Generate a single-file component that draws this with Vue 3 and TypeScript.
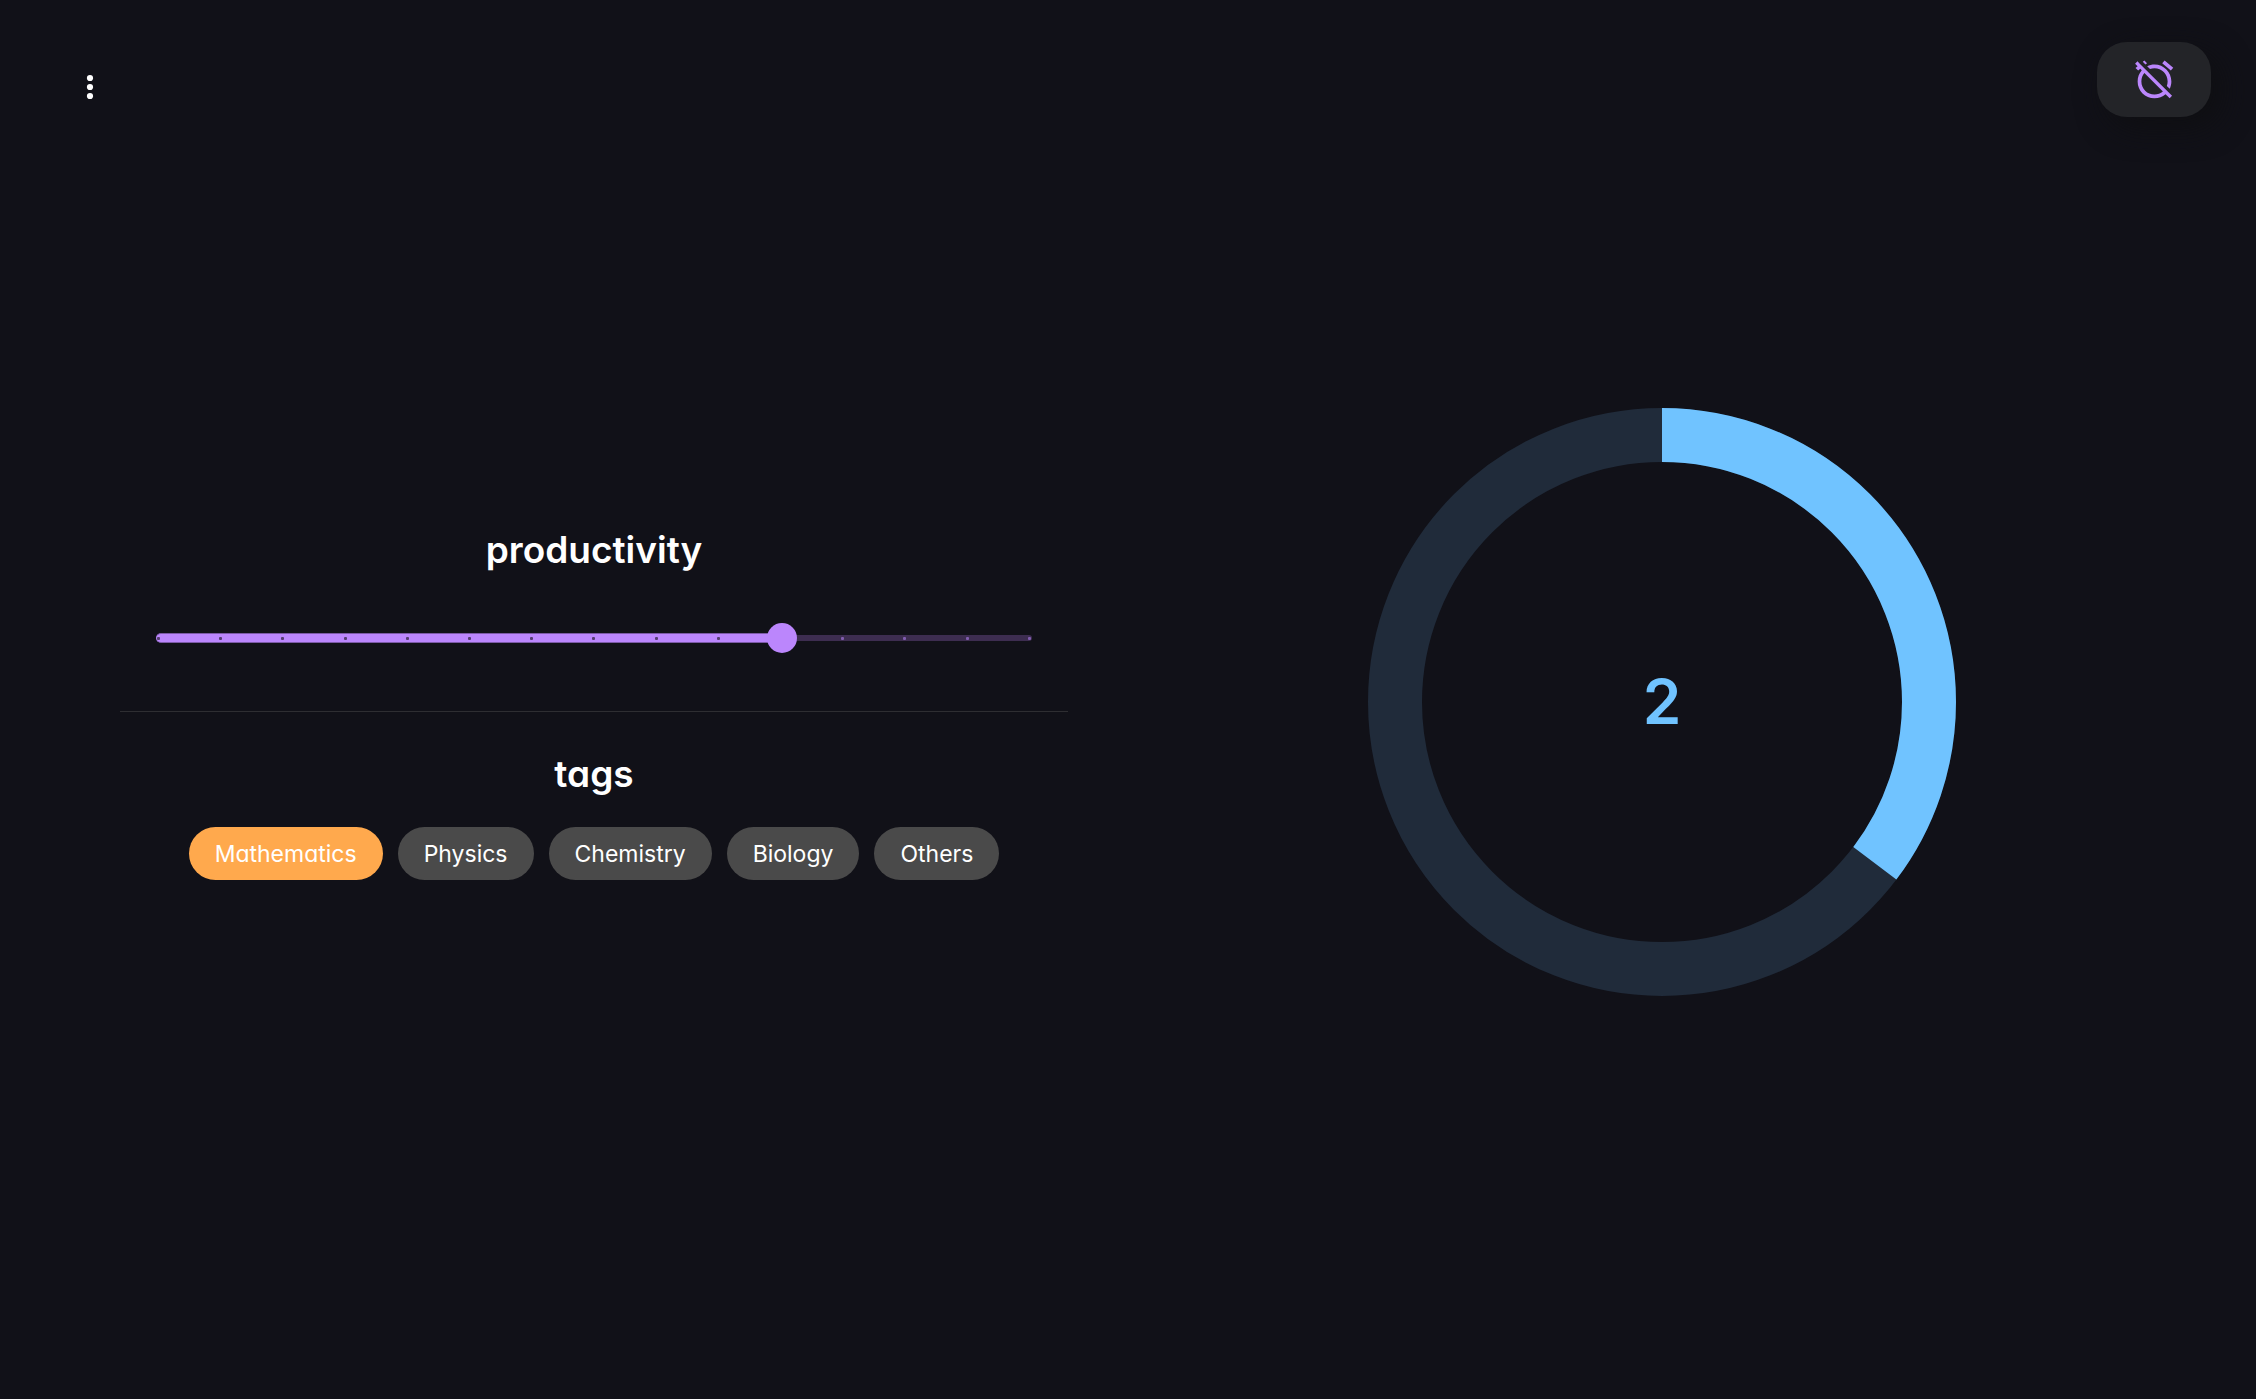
<script setup lang="ts">
import { computed, ref } from 'vue'

const tags: string[] = ['Mathematics', 'Physics', 'Chemistry', 'Biology', 'Others']
const selectedTag = ref<string>('Mathematics')

const maxProductivity = 14
const productivity = ref<number>(10)
const marks = Array.from({ length: maxProductivity + 1 }, (_, i) => i)
const filled = computed(() => `${(productivity.value / maxProductivity) * 100}%`)

const remaining = ref<number>(2)
const progress = ref<number>(35.32)
</script>

<template>
  <div class="page">
    <header class="bar">
      <button class="menu" type="button" aria-label="Menu">
        <svg width="60" height="60" viewBox="0 0 60 60" aria-hidden="true">
          <circle cx="30" cy="21" r="3.1" />
          <circle cx="30" cy="30" r="3.1" />
          <circle cx="30" cy="39" r="3.1" />
        </svg>
      </button>
      <button class="alarm" type="button" aria-label="Turn alarm off">
        <svg width="45" height="45" viewBox="0 0 24 24" aria-hidden="true">
          <path
            d="M12 6c3.87 0 7 3.13 7 7 0 .84-.16 1.65-.43 2.4l1.52 1.52c.58-1.19.91-2.51.91-3.92 0-4.97-4.03-9-9-9-1.41 0-2.73.33-3.92.91L9.6 6.43C10.35 6.16 11.16 6 12 6zm10-.28l-4.6-3.86-1.29 1.53 4.6 3.86L22 5.72zM2.92 2.29L1.65 3.57 2.98 4.9l-1.11.93 1.42 1.42 1.11-.94.8.8C3.83 8.69 3 10.75 3 13c0 4.97 4.02 9 9 9 2.25 0 4.31-.83 5.89-2.2l2.2 2.2 1.27-1.27L3.89 3.27l-.97-.98zm13.55 16.1C15.26 19.39 13.7 20 12 20c-3.87 0-7-3.13-7-7 0-1.7.61-3.26 1.61-4.47l9.86 9.86zM8.02 3.28L6.6 1.86l-.86.71 1.42 1.42.86-.71z"
          />
        </svg>
      </button>
    </header>

    <main class="content">
      <section class="settings">
        <h2><label for="productivity">productivity</label></h2>
        <div class="slider">
          <div class="rail"></div>
          <div class="track" :style="{ width: filled }"></div>
          <div class="marks">
            <span
              v-for="mark in marks"
              :key="mark"
              :class="['mark', { active: mark <= productivity }]"
            ></span>
          </div>
          <input
            id="productivity"
            v-model.number="productivity"
            type="range"
            min="0"
            :max="maxProductivity"
            step="1"
          />
        </div>
        <hr />
        <h2>tags</h2>
        <div class="tags">
          <button
            v-for="tag in tags"
            :key="tag"
            type="button"
            :class="['tag', { selected: tag === selectedTag }]"
            :aria-pressed="tag === selectedTag"
            @click="selectedTag = tag"
          >
            {{ tag }}
          </button>
        </div>
      </section>

      <section class="timer">
        <div class="dial">
          <svg viewBox="0 0 588 588" aria-hidden="true">
            <circle class="ring" cx="294" cy="294" r="267" />
            <circle
              class="arc"
              cx="294"
              cy="294"
              r="267"
              pathLength="100"
              :stroke-dasharray="`${progress} 100`"
              transform="rotate(-90 294 294)"
            />
          </svg>
          <span class="count">{{ remaining }}</span>
        </div>
      </section>
    </main>
  </div>
</template>

<style>
body {
  margin: 0;
  background: #111118;
}
</style>

<style scoped>
.page {
  box-sizing: border-box;
  min-height: 100vh;
  display: flex;
  flex-direction: column;
  padding: 42px 0 112px;
  background: #111118;
  color: #fff;
  font-family: Inter, 'Liberation Sans', sans-serif;
  font-feature-settings: 'cv11';
}

button {
  border: 0;
  padding: 0;
  font: inherit;
  font-feature-settings: inherit;
  color: inherit;
  cursor: pointer;
}

svg {
  display: block;
}

.bar {
  display: flex;
  justify-content: space-between;
  align-items: flex-end;
  padding: 0 45px 0 60px;
}

.menu {
  background: none;
}

.menu svg {
  fill: #fff;
}

.alarm {
  display: flex;
  justify-content: center;
  width: 114px;
  padding: 15px 0;
  border-radius: 30px;
  background: #232428;
  box-shadow: 10px 10px 30px #0f0f12;
}

.alarm svg {
  fill: #bb86fc;
}

.content {
  flex: 1;
  display: grid;
  grid-template-columns: 1fr 1fr;
  align-items: center;
  padding: 0 60px;
}

.settings {
  padding: 0 60px;
}

h2 {
  margin: 0;
  font-size: 37px;
  line-height: 52px;
  font-weight: 600;
  text-align: center;
}

.slider {
  position: relative;
  height: 30px;
  margin: 47px 36px 58px;
}

.rail,
.track,
.marks {
  position: absolute;
  left: 0;
  box-sizing: border-box;
}

.rail {
  top: 12px;
  width: 100%;
  height: 6px;
  border-radius: 3px;
  background: #3d2d50;
}

.track {
  top: 10px;
  height: 10px;
  border: solid #7c5aa7;
  border-width: 1px 0;
  border-radius: 5px;
  background: #bb86fc;
}

.marks {
  top: 14px;
  width: 100%;
  display: flex;
  justify-content: space-between;
  padding: 0 1px;
}

.mark {
  width: 3px;
  height: 3px;
  border-radius: 1px;
  background: #815dae;
}

.mark.active {
  background: #553d72;
}

.slider input {
  position: absolute;
  top: 0;
  left: -15px;
  width: calc(100% + 30px);
  height: 30px;
  margin: 0;
  appearance: none;
  background: transparent;
  cursor: pointer;
}

.slider input::-webkit-slider-thumb {
  appearance: none;
  width: 30px;
  height: 30px;
  border: 0;
  border-radius: 50%;
  background: #bb86fc;
}

hr {
  height: 1px;
  margin: 0 0 36px;
  border: 0;
  background: #2e2e32;
}

.tags {
  display: flex;
  flex-wrap: wrap;
  justify-content: center;
  gap: 15px;
  margin-top: 27px;
}

.tag {
  height: 53px;
  padding: 1px 26px 0;
  border-radius: 27px;
  background: #4a4a4a;
  font-size: 23px;
  line-height: 52px;
}

.tag.selected {
  background: #ffa94d;
}

.timer {
  display: flex;
  justify-content: center;
}

.dial {
  display: grid;
  place-items: center;
  width: 588px;
  max-width: 100%;
}

.dial svg,
.count {
  grid-area: 1 / 1;
}

.dial svg {
  width: 100%;
}

.dial circle {
  fill: none;
  stroke-width: 54;
}

.ring {
  stroke: #202b3a;
}

.arc {
  stroke: #70c3ff;
}

.count {
  color: #70c3ff;
  font-size: 62px;
  line-height: 72px;
  font-weight: 600;
}
</style>
